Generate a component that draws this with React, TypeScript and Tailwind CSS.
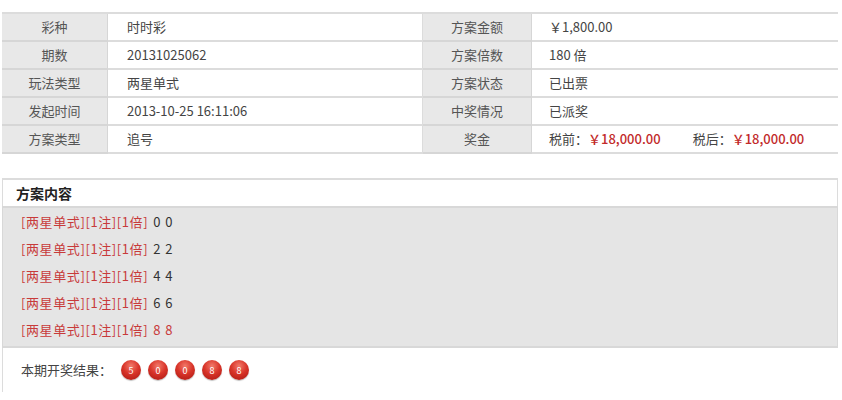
const font = { fontFamily: '"Noto Sans CJK SC", "Liberation Sans", sans-serif' };

type Row = { label: string; value: React.ReactNode; label2: string; value2: React.ReactNode };

const rows: Row[] = [
    { label: '彩种', value: '时时彩', label2: '方案金额', value2: '￥1,800.00' },
    { label: '期数', value: '20131025062', label2: '方案倍数', value2: '180 倍' },
    { label: '玩法类型', value: '两星单式', label2: '方案状态', value2: '已出票' },
    { label: '发起时间', value: '2013-10-25 16:11:06', label2: '中奖情况', value2: '已派奖' },
    {
        label: '方案类型',
        value: '追号',
        label2: '奖金',
        value2: (
            <span>
                税前：<span className="text-[#c22a2a] font-medium">￥18,000.00</span>
                <span className="ml-[32px]">税后：</span>
                <span className="text-[#c22a2a] font-medium">￥18,000.00</span>
            </span>
        ),
    },
];

const lines = ['0 0', '2 2', '4 4', '6 6', '8 8'];
const balls = ['5', '0', '0', '8', '8'];

const Ball = ({ n }: { n: string }) => (
    <div className="w-[20px] h-[20px] rounded-full flex items-center justify-center text-white text-[9px] leading-none bg-[radial-gradient(circle_at_50%_30%,#f27a6a_0%,#d9352a_45%,#a8150f_100%)] shadow-[0_1px_1px_rgba(0,0,0,0.25)]">
        {n}
    </div>
);

const App = () => {
    return (
        <div className="w-[842px] h-[400px] bg-white text-[13px] text-[#444] pt-[12px]" style={font}>
            <div className="ml-[2px] w-[836px] border-t-2 border-[#dcdcdc] grid grid-cols-[106px_315px_109px_1fr]">
                {rows.map(r => (
                    <div key={r.label} className="contents">
                        <div className="h-[28px] flex items-center justify-center bg-[#e8e8e8] border-b-2 border-r border-[#d6d6d6] text-[#555]">
                            {r.label}
                        </div>
                        <div className="h-[28px] flex items-center pl-[19px] border-b-2 border-r border-[#dcdcdc]">
                            {r.value}
                        </div>
                        <div className="h-[28px] flex items-center justify-center bg-[#e8e8e8] border-b-2 border-r border-[#d6d6d6] text-[#555]">
                            {r.label2}
                        </div>
                        <div className="h-[28px] flex items-center pl-[17px] border-b-2 border-[#dcdcdc]">
                            {r.value2}
                        </div>
                    </div>
                ))}
            </div>

            <div className="ml-[2px] w-[836px] mt-[24px]">
                <div className="h-[28px] flex items-center pl-[13px] border-t-2 border-x border-[#dcdcdc] font-bold text-[14px] text-[#222]">
                    方案内容
                </div>
                <div className="bg-[#e5e5e5] border-t-2 border-b-2 border-x border-[#d8d8d8] pb-[3px] pl-[18px]">
                    {lines.map((l, i) => (
                        <div key={i} className="h-[27px] flex items-center">
                            <span className="text-[#c83a3a] tracking-[0.6px]">[两星单式][1注][1倍]</span>
                            <span className={i === 4 ? 'ml-[5px] tracking-[1px] text-[#c83a3a]' : 'ml-[5px] tracking-[1px] text-[#333]'}>{l}</span>
                        </div>
                    ))}
                </div>
                <div className="h-[44px] border-l border-[#dcdcdc] flex items-center pl-[18px] gap-[9px]">
                    <span className="text-[#444]">本期开奖结果：</span>
                    <div className="flex gap-[7px]">
                        {balls.map((b, i) => (
                            <Ball key={i} n={b} />
                        ))}
                    </div>
                </div>
            </div>
        </div>
    );
};

export default App;
